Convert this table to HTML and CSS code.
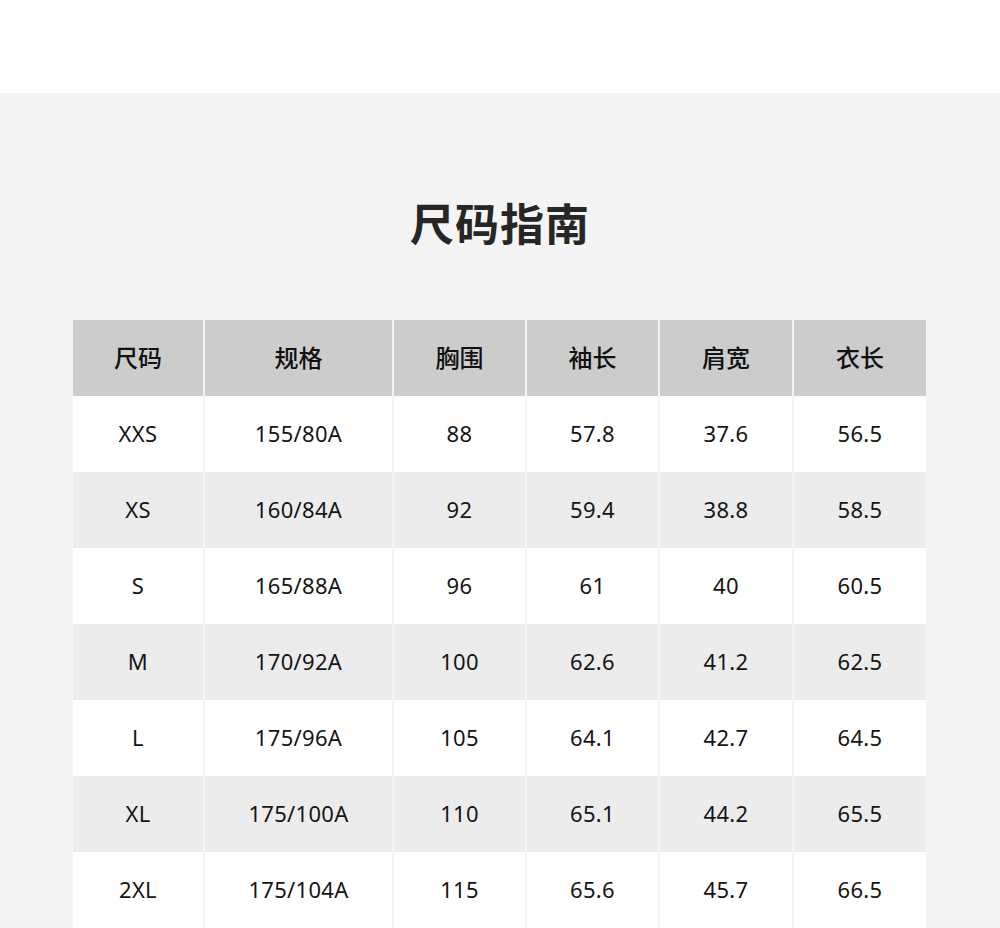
FILE: index.html
```html
<!DOCTYPE html>
<html lang="zh-CN">
<head>
<meta charset="utf-8">
<title>尺码指南</title>
<link rel="stylesheet" href="styles.css">
</head>
<body>
<div class="topbar"></div>
<section class="guide">
  <h1 class="title">尺码指南</h1>
  <div class="table">
    <div class="row head">
      <div class="cell">尺码</div><div class="cell">规格</div><div class="cell">胸围</div><div class="cell">袖长</div><div class="cell">肩宽</div><div class="cell">衣长</div>
    </div>
    <div class="row">
      <div class="cell">XXS</div><div class="cell">155/80A</div><div class="cell">88</div><div class="cell">57.8</div><div class="cell">37.6</div><div class="cell">56.5</div>
    </div>
    <div class="row alt">
      <div class="cell">XS</div><div class="cell">160/84A</div><div class="cell">92</div><div class="cell">59.4</div><div class="cell">38.8</div><div class="cell">58.5</div>
    </div>
    <div class="row">
      <div class="cell">S</div><div class="cell">165/88A</div><div class="cell">96</div><div class="cell">61</div><div class="cell">40</div><div class="cell">60.5</div>
    </div>
    <div class="row alt">
      <div class="cell">M</div><div class="cell">170/92A</div><div class="cell">100</div><div class="cell">62.6</div><div class="cell">41.2</div><div class="cell">62.5</div>
    </div>
    <div class="row">
      <div class="cell">L</div><div class="cell">175/96A</div><div class="cell">105</div><div class="cell">64.1</div><div class="cell">42.7</div><div class="cell">64.5</div>
    </div>
    <div class="row alt">
      <div class="cell">XL</div><div class="cell">175/100A</div><div class="cell">110</div><div class="cell">65.1</div><div class="cell">44.2</div><div class="cell">65.5</div>
    </div>
    <div class="row">
      <div class="cell">2XL</div><div class="cell">175/104A</div><div class="cell">115</div><div class="cell">65.6</div><div class="cell">45.7</div><div class="cell">66.5</div>
    </div>
  </div>
</section>
</body>
</html>
```

FILE: styles.css
```css
html, body {
  margin: 0;
  padding: 0;
  background: #f4f4f4;
}
body {
  font-family: "Noto Sans", "Noto Sans CJK SC", sans-serif;
  color: #1a1a1a;
}
.topbar {
  height: 93px;
  background: #ffffff;
}
.guide {
  background: #f4f4f4;
  padding-top: 96px;
  padding-bottom: 40px;
}
.title {
  margin: 0;
  text-align: center;
  font-family: "Noto Sans CJK SC", sans-serif;
  font-size: 44px;
  font-weight: 700;
  line-height: 66px;
  letter-spacing: 1px;
  color: #262626;
}
.table {
  margin: 65px 0 0 73px;
  width: 853px;
}
.row {
  display: grid;
  grid-template-columns: 130px 187px 131px 131px 132px 132px;
  column-gap: 2px;
  height: 76px;
}
.cell {
  display: flex;
  align-items: center;
  justify-content: center;
  padding-bottom: 3px;
  background: #ffffff;
  font-size: 22px;
  letter-spacing: 0.3px;
  color: #151515;
}
.row.alt .cell {
  background: #ececec;
}
.row.head .cell {
  background: #cccccc;
  font-family: "Noto Sans CJK SC", sans-serif;
  font-size: 24px;
  font-weight: 500;
  letter-spacing: 0;
  color: #111111;
}
```
